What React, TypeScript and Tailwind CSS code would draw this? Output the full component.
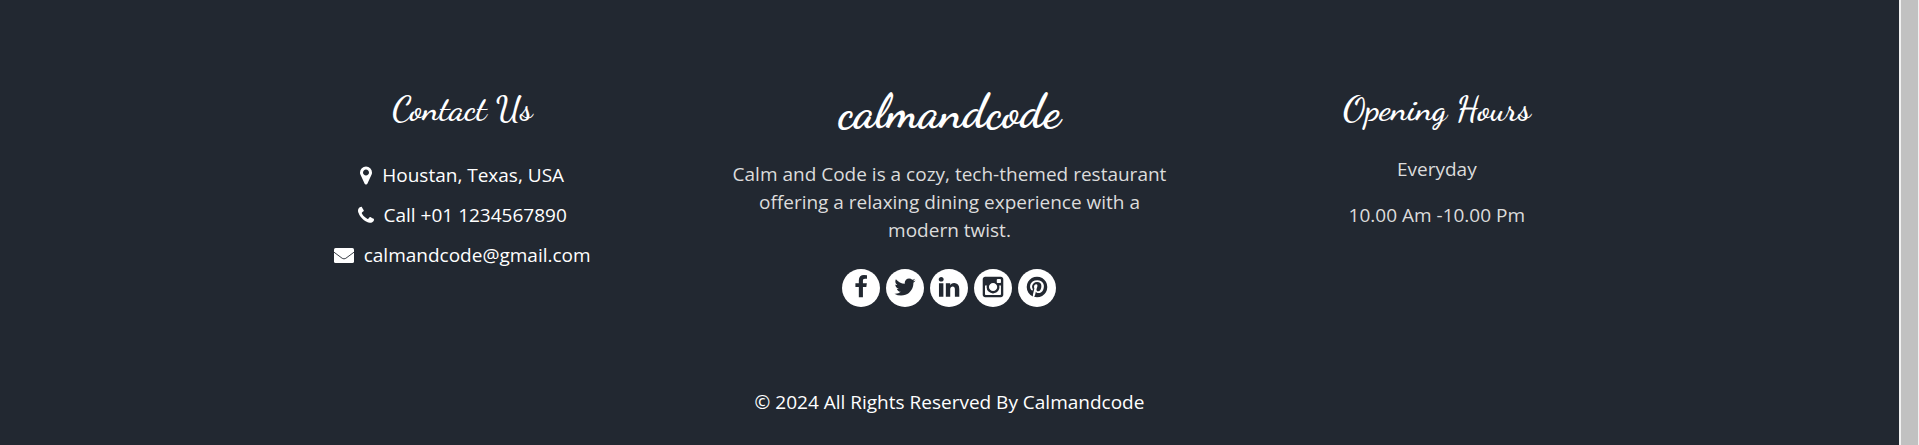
import type { ReactNode } from "react";

const paths = {
  marker:
    "M1152 640q0-106-75-181t-181-75-181 75-75 181 75 181 181 75 181-75 75-181zm256 0q0 109-33 179l-364 774q-16 33-47.5 52t-67.5 19-67.5-19-46.5-52l-365-774q-33-70-33-179 0-212 150-362t362-150 362 150 150 362z",
  phone:
    "M1600 1240q0 27-10 70.5t-21 68.5q-21 50-122 106-94 51-186 51-27 0-53-3.5t-57.5-12.5-47-14.5-55.5-20.5-49-18q-98-35-175-83-127-79-264-216t-216-264q-48-77-83-175-3-9-18-49t-20.5-55.5-14.5-47-12.5-57.5-3.5-53q0-92 51-186 56-101 106-122 25-11 68.5-21t70.5-10q14 0 21 3 18 6 53 76 11 19 30 54t35 63.5 31 53.5q3 4 17.5 25t21.5 35.5 7 28.5q0 20-28.5 50t-62 55-62 53-28.5 46q0 9 5 22.5t8.5 20.5 14 24 11.5 19q76 137 174 235t235 174q2 1 19 11.5t24 14 20.5 8.5 22.5 5q18 0 46-28.5t53-62 55-62 50-28.5q14 0 28.5 7t35.5 21.5 25 17.5q25 15 53.5 31t63.5 35 54 30q70 35 76 53 3 7 3 21z",
  facebook:
    "M1343 12v264h-157q-86 0-116 36t-30 108v189h293l-39 296h-254v759h-306v-759h-255v-296h255v-218q0-186 104-288.5t277-102.5q147 0 228 12z",
  twitter:
    "M1684 408q-67 98-162 167 1 14 1 42 0 130-38 259.5t-115.5 248.5-184.5 210.5-258 146-323 54.5q-271 0-496-145 35 4 78 4 225 0 401-138-105-2-188-64.5t-114-159.5q33 5 61 5 43 0 85-11-112-23-185.5-111.5t-73.5-205.5v-4q68 38 146 41-66-44-105-115t-39-154q0-88 44-163 121 149 294.5 238.5t371.5 99.5q-8-38-8-74 0-134 94.5-228.5t228.5-94.5q140 0 236 102 109-21 205-78-37 115-142 178 93-10 186-50z",
  linkedin:
    "M477 625v991h-330v-991h330zm21-306q1 73-50.5 122t-135.5 49h-2q-82 0-132-49t-50-122q0-74 51.5-122.5t134.5-48.5 133 48.5 51 122.5zm1166 729v568h-329v-530q0-105-40.5-164.5t-126.5-59.5q-63 0-105.5 34.5t-63.5 85.5q-11 30-11 81v553h-329q2-399 2-647t-1-296l-1-48h329v144h-2q20-32 41-56t56.5-52 87-43.5 114.5-15.5q171 0 275 113.5t104 332.5z",
  instagram:
    "M1490 1426v-648h-135q20 63 20 131 0 126-64 232.5t-174 168.5-240 62q-197 0-337-135.5t-140-327.5q0-68 20-131h-141v648q0 26 17.500 43.500t43.500 17.500h1069q25 0 43-17.500t18-43.500zM1210 893q0-124-90.500-211.500t-218.500-87.500q-127 0-217.500 87.500t-90.500 211.500 90.500 211.500 217.500 87.500q128 0 218.500-87.500t90.500-211.500zM1490 533v-165q0-28-20-48.500t-49-20.500h-174q-29 0-49 20.500t-20 48.500v165q0 29 20 49t49 20h174q29 0 49-20t20-49zM1664 311v1170q0 75-54 129t-129 54h-1170q-75 0-129-54t-54-129v-1170q0-75 54-129t129-54h1170q75 0 129 54t54 129z",
  pinterest:
    "M1664 896q0 209-103 385.5t-279.5 279.5-385.5 103q-111 0-218-32 59-93 78-164 9-34 54-211 20 39 73 67.5t114 28.5q121 0 216-68.5t147-188.5 52-270q0-114-59.5-214t-172.5-163-255-63q-105 0-196 29t-154.5 77-109 110.5-67 129.5-21.5 134q0 104 40 183t117 111q30 12 38-20 2-7 8-31t8-30q6-23-11-43-51-61-51-151 0-151 104.5-259.5t273.5-108.5q151 0 235.5 82t84.5 213q0 170-68.5 289t-175.5 119q-61 0-98-43.5t-23-104.5q8-35 26.5-93.5t30-103 11.5-75.5q0-50-27-83t-77-33q-62 0-105 57t-43 142q0 73 25 122l-99 418q-17 70-13 177-206-91-333-281t-127-423q0-209 103-385.5t279.5-279.5 385.5-103 385.5 103 279.5 279.5 103 385.5z",
};

type IconName = keyof typeof paths;

function Icon({ name, box, className }: { name: IconName; box?: string; className: string }) {
  return (
    <svg viewBox={box ?? "0 0 1792 1792"} fill="currentColor" fillRule="evenodd" aria-hidden="true" className={className}>
      <path d={paths[name]} />
    </svg>
  );
}

function Envelope() {
  return (
    <svg viewBox="0 0 20 15" aria-hidden="true" className="h-[15px] w-5">
      <rect width="20" height="15" rx="1.6" fill="currentColor" />
      <path d="M0 4.2 8.200 10.300Q10 11.500 11.800 10.300L20 4.200" fill="none" stroke="#222831" strokeWidth="0.9" />
    </svg>
  );
}

function ContactLink({ icon, children }: { icon: ReactNode; children: ReactNode }) {
  return (
    <a href="#contact" className="flex items-center gap-[10px] leading-7">
      {icon}
      <span>{children}</span>
    </a>
  );
}

const socials: { name: IconName; label: string }[] = [
  { name: "facebook", label: "Facebook" },
  { name: "twitter", label: "Twitter" },
  { name: "linkedin", label: "LinkedIn" },
  { name: "instagram", label: "Instagram" },
  { name: "pinterest", label: "Pinterest" },
];

export default function App() {
  return (
    <div className="flex min-h-screen bg-[#222831] font-['Open_Sans',sans-serif] text-[19px] text-white">
      <footer className="flex-1 pt-[88px] pb-7 text-center">
        <div className="mx-auto grid max-w-[1462px] grid-cols-3">
          <section className="flex flex-col items-center px-5">
            <h4 className="font-['Dancing_Script',cursive] text-[35px] leading-[42px] font-semibold">Contact Us</h4>
            <div className="mt-[31px] flex flex-col items-center gap-3">
              <ContactLink icon={<Icon name="marker" box="384 0 1024 1792" className="h-[21px] w-3" />}>
                Houstan, Texas, USA
              </ContactLink>
              <ContactLink icon={<Icon name="phone" box="192 0 1408 1792" className="h-[21px] w-4" />}>
                Call +01 1234567890
              </ContactLink>
              <ContactLink icon={<Envelope />}>calmandcode@gmail.com</ContactLink>
            </div>
          </section>

          <section className="flex flex-col items-center px-5">
            <a
              href="#home"
              className="font-['Dancing_Script',cursive] text-[48px] leading-[48px] font-bold"
            >
              calmandcode
            </a>
            <p className="mt-6 leading-7 text-[#dcdcdc]">
              Calm and Code is a cozy, tech-themed restaurant offering a relaxing dining experience with a modern twist.
            </p>
            <div className="mt-[25px] flex gap-[6px]">
              {socials.map(({ name, label }) => (
                <a
                  key={name}
                  href={`#${name}`}
                  aria-label={label}
                  className="flex size-[38px] items-center justify-center rounded-full bg-white text-[#222831]"
                >
                  <Icon name={name} className="mb-[2px] size-6" />
                </a>
              ))}
            </div>
          </section>

          <section className="flex flex-col items-center px-5">
            <h4 className="font-['Dancing_Script',cursive] text-[35px] leading-[42px] font-semibold">Opening Hours</h4>
            <p className="mt-[25px] leading-7 text-[#dcdcdc]">Everyday</p>
            <p className="mt-[18px] leading-7 text-[#dcdcdc]">10.00 Am -10.00 Pm</p>
          </section>
        </div>
        <p className="mt-[81px] leading-7">© 2024 All Rights Reserved By Calmandcode</p>
      </footer>
      <div className="w-5 shrink-0 border-r border-l-2 border-[#f1f1f1] bg-[#c1c1c1]" />
    </div>
  );
}
